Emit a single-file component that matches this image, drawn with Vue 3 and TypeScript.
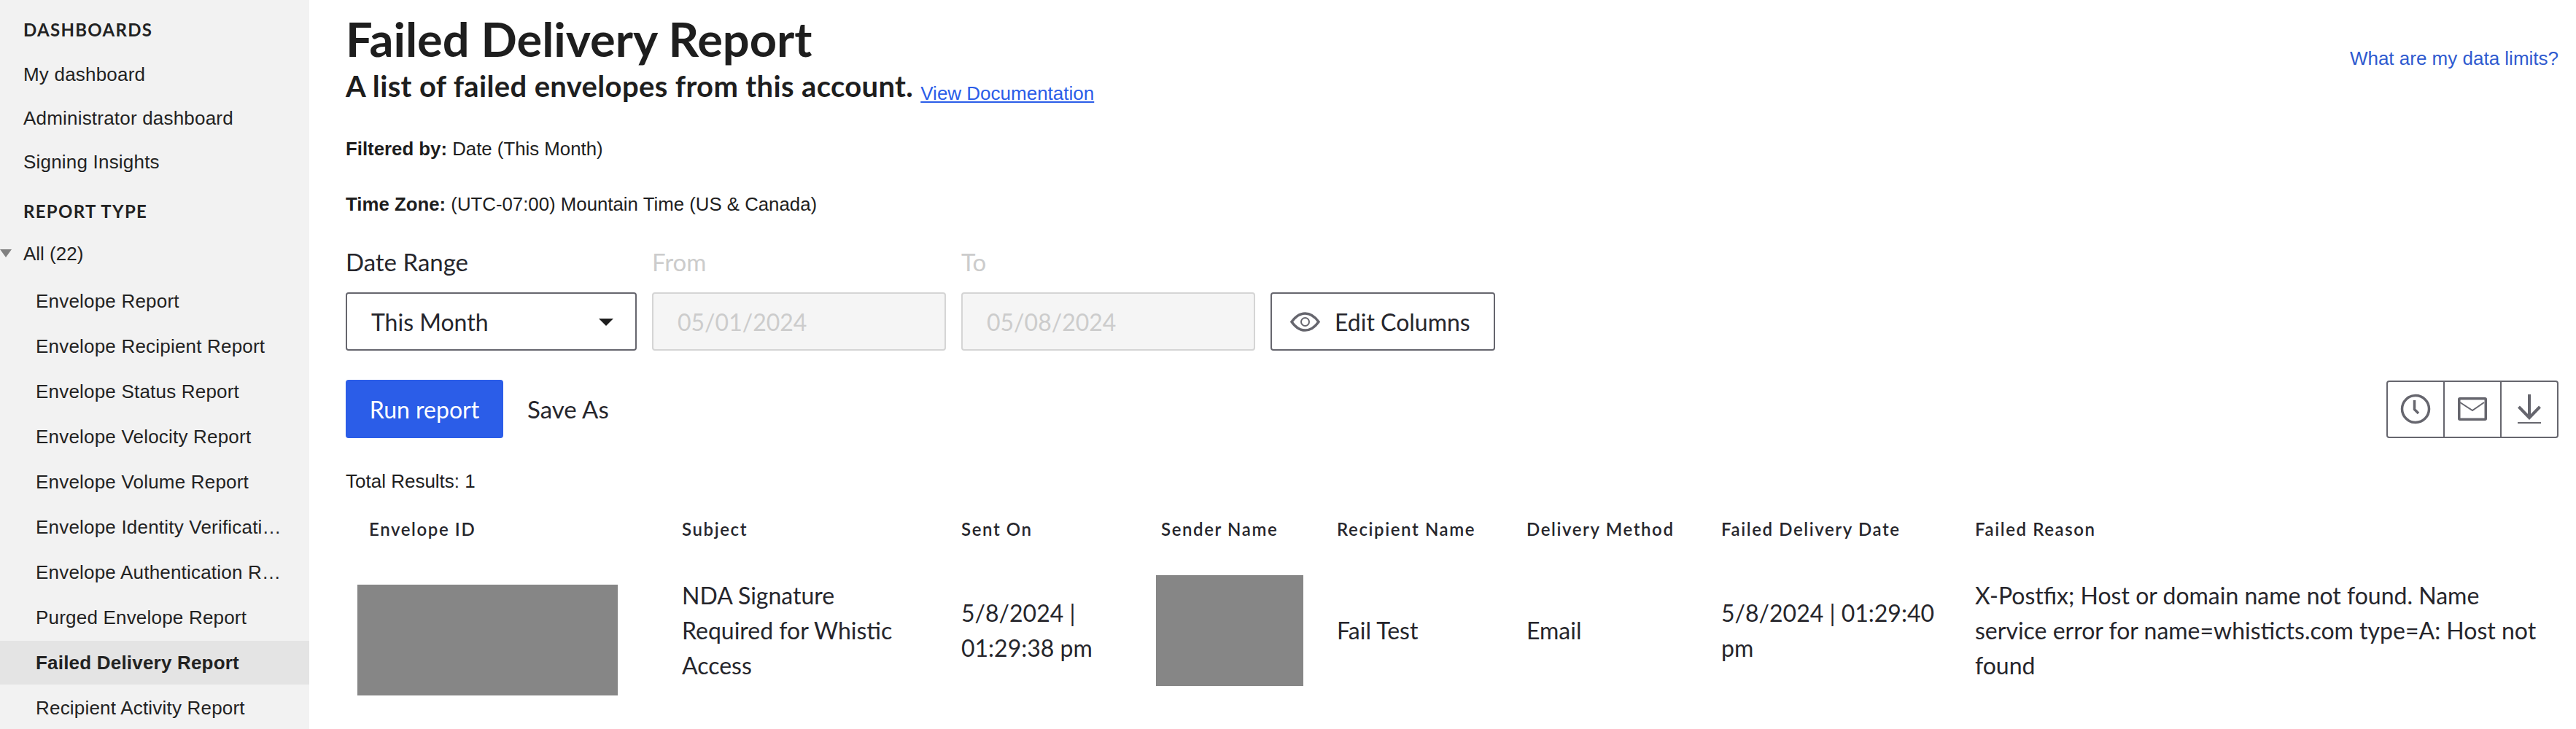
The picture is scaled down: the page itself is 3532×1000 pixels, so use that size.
<template>
  <div class="page">
    <aside class="sidebar">
      <h4 class="side-title first">DASHBOARDS</h4>
      <a v-for="item in dashboards" :key="item" class="side-link">{{ item }}</a>
      <h4 class="side-title second">REPORT TYPE</h4>
      <div class="side-all"><span class="caret"></span>All (22)</div>
      <a
        v-for="item in reports"
        :key="item"
        :class="['side-report', { active: item === current }]"
      >
        <span class="side-label">{{ item }}</span>
      </a>
    </aside>

    <main class="main">
      <div class="top">
        <div>
          <h1 class="title">Failed Delivery Report</h1>
          <p class="subtitle">
            A list of failed envelopes from this account.
            <a class="doc-link">View Documentation</a>
          </p>
        </div>
        <a class="limits">What are my data limits?</a>
      </div>

      <p class="meta filtered"><b>Filtered by:</b> Date (This Month)</p>
      <p class="meta zone"><b>Time Zone:</b> (UTC-07:00) Mountain Time (US &amp; Canada)</p>

      <div class="filters">
        <div class="field">
          <label>Date Range</label>
          <div class="select">This Month<span class="select-arrow"></span></div>
        </div>
        <div class="field disabled">
          <label>From</label>
          <div class="input">05/01/2024</div>
        </div>
        <div class="field disabled">
          <label>To</label>
          <div class="input">05/08/2024</div>
        </div>
        <button class="edit-btn" type="button">
          <svg width="41" height="27" viewBox="0 0 41 27" fill="none" stroke="#66666e">
            <path d="M2 13.500C8 5 14 2 20.500 2S33 5 39 13.500C33 22 27 25 20.500 25S8 22 2 13.500Z" stroke-width="3.500" />
            <circle cx="20.500" cy="13.500" r="5.500" stroke-width="2" />
          </svg>
          Edit Columns
        </button>
      </div>

      <div class="actions">
        <button class="run-btn" type="button">Run report</button>
        <button class="save-btn" type="button">Save As</button>
        <div class="tools">
          <span class="tool">
            <svg width="44" height="44" viewBox="0 0 44 44" fill="none" stroke="#66666e">
              <circle cx="22" cy="22" r="18.500" stroke-width="3.500" />
              <path d="M20.500 10V22.500L26 28" stroke-width="3.500" />
            </svg>
          </span>
          <span class="tool">
            <svg width="44" height="44" viewBox="0 0 44 44" fill="none" stroke="#66666e">
              <rect x="3.750" y="7.750" width="36.500" height="28.500" rx="1" stroke-width="3.500" />
              <path d="M5 13L22 24L38 13" stroke-width="2" />
            </svg>
          </span>
          <span class="tool">
            <svg width="44" height="44" viewBox="0 0 44 44" fill="none" stroke="#66666e">
              <path d="M22 2V34" stroke-width="4" />
              <path d="M7.500 19L22 34L36.500 19" stroke-width="4" />
              <path d="M6 41H38" stroke-width="2" />
            </svg>
          </span>
        </div>
      </div>

      <div class="total">Total Results: 1</div>

      <table class="results">
        <colgroup>
          <col v-for="col in columns" :key="col.name" :style="{ width: col.width + 'px' }" />
        </colgroup>
        <thead>
          <tr>
            <th v-for="col in columns" :key="col.name">{{ col.name }}</th>
          </tr>
        </thead>
        <tbody>
          <tr>
            <td><div class="redact envelope-id"></div></td>
            <td>NDA Signature Required for Whistic Access</td>
            <td>5/8/2024 | 01:29:38 pm</td>
            <td><div class="redact sender"></div></td>
            <td>Fail Test</td>
            <td>Email</td>
            <td>5/8/2024 | 01:29:40 pm</td>
            <td>X-Postfix; Host or domain name not found. Name service error for name=whisticts.com type=A: Host not found</td>
          </tr>
        </tbody>
      </table>
    </main>
  </div>
</template>

<script setup lang="ts">
const dashboards: string[] = ["My dashboard", "Administrator dashboard", "Signing Insights"];

const reports: string[] = [
  "Envelope Report",
  "Envelope Recipient Report",
  "Envelope Status Report",
  "Envelope Velocity Report",
  "Envelope Volume Report",
  "Envelope Identity Verification Report",
  "Envelope Authentication Report",
  "Purged Envelope Report",
  "Failed Delivery Report",
  "Recipient Activity Report",
];

const current = "Failed Delivery Report";

const columns: { name: string; width: number }[] = [
  { name: "Envelope ID", width: 429 },
  { name: "Subject", width: 383 },
  { name: "Sent On", width: 274 },
  { name: "Sender Name", width: 241 },
  { name: "Recipient Name", width: 260 },
  { name: "Delivery Method", width: 267 },
  { name: "Failed Delivery Date", width: 348 },
  { name: "Failed Reason", width: 832 },
];
</script>

<style>
html,
body {
  margin: 0;
  background: #fff;
}
</style>

<style scoped>
.page {
  display: flex;
  height: 1000px;
  overflow: hidden;
  font-family: "Lato", "Liberation Sans", sans-serif;
  color: #1e1e1e;
}

/* sidebar */
.sidebar {
  width: 424px;
  flex: none;
  background: #f2f2f2;
  font-family: "Liberation Sans", Arial, sans-serif;
  font-size: 26px;
  color: #222;
}
.side-title {
  margin: 0;
  padding-left: 32px;
  font-family: "Lato", sans-serif;
  font-size: 24px;
  font-weight: 700;
  letter-spacing: 1.300px;
  line-height: 30px;
}
.side-title.first {
  padding-top: 26px;
  margin-bottom: 16px;
}
.side-title.second {
  margin-top: 23px;
  margin-bottom: 13px;
}
.side-link {
  display: block;
  height: 60px;
  line-height: 60px;
  padding-left: 32px;
  letter-spacing: 0.200px;
}
.side-all {
  position: relative;
  height: 60px;
  line-height: 60px;
  padding-left: 32px;
  margin-bottom: 5px;
}
.caret {
  position: absolute;
  left: 0;
  top: 24px;
  border-left: 8px solid transparent;
  border-right: 8px solid transparent;
  border-top: 11px solid #808080;
}
.side-report {
  display: block;
  height: 60px;
  line-height: 60px;
  margin-bottom: 2px;
  padding: 0 36px 0 49px;
  letter-spacing: 0.200px;
}
.side-report.active {
  background: #e4e4e4;
  font-weight: 700;
}
.side-label {
  display: block;
  overflow: hidden;
  white-space: nowrap;
  text-overflow: ellipsis;
}

/* main column */
.main {
  flex: 1;
  min-width: 0;
  padding: 15px 24px 0 50px;
}
.top {
  display: flex;
  justify-content: space-between;
  align-items: flex-start;
}
.title {
  margin: 0;
  font-size: 65px;
  font-weight: 700;
  line-height: 76px;
}
.subtitle {
  margin: 3px 0 0;
  font-size: 40px;
  font-weight: 700;
  line-height: 48px;
  letter-spacing: 0.350px;
}
.doc-link {
  font-family: "Liberation Sans", Arial, sans-serif;
  font-size: 26px;
  font-weight: 400;
  letter-spacing: 0;
  color: #2b5de8;
  text-decoration: underline;
  vertical-align: -4px;
}
.limits {
  margin-top: 47px;
  font-family: "Liberation Sans", Arial, sans-serif;
  font-size: 26px;
  line-height: 36px;
  color: #2f5acf;
}
.meta {
  margin: 0;
  font-family: "Liberation Sans", Arial, sans-serif;
  font-size: 25.800px;
  line-height: 36px;
}
.filtered {
  margin-top: 34px;
}
.zone {
  margin-top: 40px;
}

.filters {
  display: flex;
  align-items: flex-end;
  gap: 21px;
  margin-top: 43px;
  color: #26262c;
}
.field {
  display: flex;
  flex-direction: column;
  gap: 24px;
}
.field label {
  font-size: 33px;
  line-height: 36px;
}
.field.disabled label {
  color: #ccc;
}
.select,
.input,
.edit-btn {
  box-sizing: border-box;
  height: 80px;
  border: 2px solid #66666e;
  border-radius: 4px;
  display: flex;
  align-items: center;
  font-family: inherit;
  font-size: 32px;
  color: #26262c;
  background: #fff;
}
.select {
  width: 399px;
  padding-left: 33px;
  position: relative;
}
.select-arrow {
  position: absolute;
  right: 30px;
  top: 34px;
  border-left: 10px solid transparent;
  border-right: 10px solid transparent;
  border-top: 10px solid #1e1e1e;
}
.input {
  width: 403px;
  padding-left: 33px;
  background: #f5f5f5;
  border-color: #d5d5d5;
  color: #ccc;
}
.edit-btn {
  width: 308px;
  padding: 0 0 0 25px;
  gap: 20px;
}

.actions {
  display: flex;
  align-items: center;
  margin-top: 40px;
}
.run-btn {
  width: 216px;
  height: 80px;
  border: none;
  border-radius: 4px;
  background: #2b5de8;
  color: #fff;
  font-family: inherit;
  font-size: 32px;
}
.save-btn {
  margin-left: 33px;
  padding: 0;
  border: none;
  background: none;
  font-family: inherit;
  font-size: 33px;
  color: #26262c;
}
.tools {
  margin-left: auto;
  display: flex;
  height: 79px;
  box-sizing: border-box;
  border: 2px solid #66666e;
  border-radius: 4px;
}
.tool {
  box-sizing: border-box;
  width: 78px;
  display: flex;
  align-items: center;
  justify-content: center;
}
.tool:first-child {
  width: 76px;
}
.tool + .tool {
  border-left: 2px solid #66666e;
}

.total {
  margin-top: 42px;
  font-family: "Liberation Sans", Arial, sans-serif;
  font-size: 26px;
  line-height: 34px;
}

.results {
  table-layout: fixed;
  border-collapse: collapse;
  width: 3034px;
  margin-top: 32px;
  font-size: 32px;
  line-height: 48px;
  color: #26262c;
}
.results th {
  padding: 0 0 0 32px;
  height: 34px;
  text-align: left;
  font-size: 24px;
  line-height: 34px;
  font-weight: 600;
  letter-spacing: 1.600px;
  white-space: nowrap;
}
.results td {
  padding: 33px 20px 0 32px;
  vertical-align: middle;
}
.redact {
  background: #868686;
}
.envelope-id {
  width: 357px;
  height: 152px;
  margin: 26px 0 0 -16px;
}
.sender {
  width: 202px;
  height: 152px;
  margin: 0 0 0 -7px;
}
</style>
